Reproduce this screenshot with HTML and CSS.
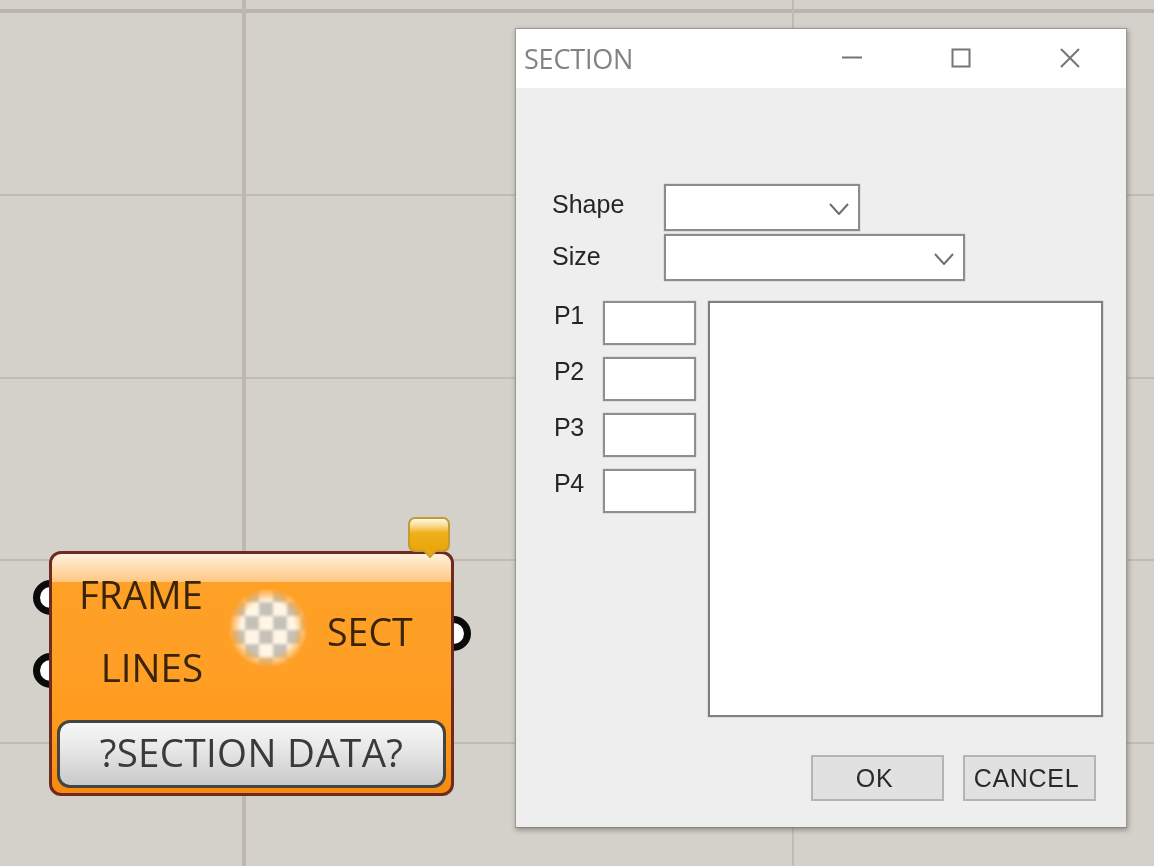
FILE: index.html
```html
<!DOCTYPE html>
<html lang="en">
<head>
<meta charset="utf-8">
<title>SECTION</title>
<link rel="stylesheet" href="styles.css">
</head>
<body>
<div class="canvas">
  <div class="gl gl-h gl-h0"></div>
  <div class="gl gl-h gl-h1"></div>
  <div class="gl gl-h gl-h2"></div>
  <div class="gl gl-h gl-h3"></div>
  <div class="gl gl-h gl-h4"></div>
  <div class="gl gl-v gl-v0"></div>
  <div class="gl gl-v gl-v1"></div>

  <div class="node">
    <span class="port port-a"></span>
    <span class="port port-b"></span>
    <span class="port port-c"></span>
    <div class="node-face">
      <div class="node-main">
        <div class="inputs">
          <span>FRAME</span>
          <span>LINES</span>
        </div>
        <svg class="checker" width="84" height="84" viewBox="0 0 84 84" aria-hidden="true">
          <defs>
            <pattern id="chk" width="28" height="28" patternUnits="userSpaceOnUse" x="5" y="2">
              <rect width="28" height="28" fill="#fff6e6"/>
              <rect x="0" y="14" width="14" height="14" fill="#c6c1b8"/>
              <rect x="14" y="0" width="14" height="14" fill="#c6c1b8"/>
            </pattern>
            <filter id="soft" x="-20%" y="-20%" width="140%" height="140%"><feGaussianBlur stdDeviation="1.8"/></filter>
            <radialGradient id="fade">
              <stop offset="0.66" stop-color="#fff"/>
              <stop offset="1" stop-color="#fff" stop-opacity="0"/>
            </radialGradient>
            <mask id="disc"><circle cx="42" cy="42" r="40" fill="url(#fade)"/></mask>
          </defs>
          <g mask="url(#disc)"><rect width="84" height="84" fill="url(#chk)" filter="url(#soft)"/></g>
        </svg>
        <span class="output">SECT</span>
      </div>
      <div class="node-button">?SECTION DATA?</div>
    </div>
    <div class="balloon"></div>
  </div>

  <div class="dialog">
    <div class="titlebar">
      <span class="title">SECTION</span>
      <div class="win-controls">
        <svg width="20" height="20" viewBox="0 0 20 20" aria-hidden="true"><path d="M0 9.5h20" class="glyph"/></svg>
        <svg width="20" height="20" viewBox="0 0 20 20" aria-hidden="true"><path d="M1.5 1.5h17v17h-17z" class="glyph"/></svg>
        <svg width="20" height="20" viewBox="0 0 20 20" aria-hidden="true"><path d="M1 1l18 18M19 1L1 19" class="glyph"/></svg>
      </div>
    </div>
    <div class="dialog-body">
      <div class="combo-row">
        <label class="lbl lbl-combo">Shape</label>
        <div class="combo combo-s"><svg width="20" height="12" viewBox="0 0 20 12" aria-hidden="true"><path d="M1 1l9 10 9-10" class="chev"/></svg></div>
      </div>
      <div class="combo-row combo-row-2">
        <label class="lbl lbl-combo">Size</label>
        <div class="combo combo-l"><svg width="20" height="12" viewBox="0 0 20 12" aria-hidden="true"><path d="M1 1l9 10 9-10" class="chev"/></svg></div>
      </div>
      <div class="params">
        <div class="param-list">
          <div class="param"><label class="lbl lbl-p">P1</label><div class="field"></div></div>
          <div class="param"><label class="lbl lbl-p">P2</label><div class="field"></div></div>
          <div class="param"><label class="lbl lbl-p">P3</label><div class="field"></div></div>
          <div class="param"><label class="lbl lbl-p">P4</label><div class="field"></div></div>
        </div>
        <div class="preview"></div>
      </div>
      <div class="actions">
        <div class="btn">OK</div>
        <div class="btn">CANCEL</div>
      </div>
    </div>
  </div>
</div>
</body>
</html>
```
FILE: styles.css
```css
* { box-sizing: border-box; }
html, body { margin: 0; padding: 0; }
body { width: 1154px; height: 866px; overflow: hidden; background: #d4d0ca; }
.canvas { position: relative; width: 1154px; height: 866px; overflow: hidden; }

/* canvas grid */
.gl { position: absolute; background: #c0bcb5; filter: blur(0.6px); }
.gl-h { left: 0; width: 1154px; height: 2px; }
.gl-v { top: 0; height: 866px; width: 2px; }
.gl-h0 { top: 9px; height: 4px; background: #b9b5ae; }
.gl-h1 { top: 194px; }
.gl-h2 { top: 377px; }
.gl-h3 { top: 559px; }
.gl-h4 { top: 742px; }
.gl-v0 { left: 242px; width: 4px; background: #bdb9b2; }
.gl-v1 { left: 792px; }

/* component node */
.node { position: absolute; left: 49px; top: 551px; width: 405px; height: 245px; filter: blur(0.5px); }
.port { position: absolute; width: 35px; height: 35px; border: 7px solid #0a0a0a; border-radius: 50%; background: #fff; }
.port-a { left: -16px; top: 29px; }
.port-b { left: -16px; top: 102px; }
.port-c { left: 387px; top: 65px; }
.node-face {
  position: relative;
  width: 100%;
  height: 100%;
  border: 3px solid #6f2a20;
  border-radius: 12px;
  display: flex;
  flex-direction: column;
  padding: 0 5px 5px;
  background:
    linear-gradient(to bottom, #fff1de 0, #ffc782 28px, transparent 28px) no-repeat,
    linear-gradient(to bottom, #ffa127 0, #ff9f25 120px, #ff9a1c 165px, #f88a10 100%);
  font-family: "Open Sans", "Noto Sans", sans-serif;
  color: #3a2408;
}
.node-main { flex: 1; display: flex; align-items: center; min-height: 0; }
.inputs {
  width: 146px;
  height: 100%;
  display: flex;
  flex-direction: column;
  align-items: flex-end;
  padding-top: 19px;
  gap: 31px;
  font-size: 38.5px;
  line-height: 42px;
}
.checker { flex: none; margin: 0 0 19px 23px; }
.output { font-size: 37.5px; line-height: 42px; margin: 0 0 11px 17px; }
.node-button {
  flex: none;
  height: 68px;
  border: 3px solid #444442;
  border-radius: 13px;
  background: linear-gradient(to bottom, #f7f7f7 0, #e8e8e8 40%, #c9c9c9 100%);
  display: flex;
  align-items: center;
  justify-content: center;
  font-size: 38.5px;
  letter-spacing: 0.35px;
  line-height: 42px;
  color: #3a3a3a;
  padding-bottom: 5px;
}
.balloon {
  position: absolute;
  left: 359px;
  top: -34px;
  width: 42px;
  height: 35px;
  border: 2px solid #c39a34;
  border-radius: 7px;
  background: linear-gradient(to bottom, #fff8e8 0, #f8da8c 22%, #f0b01a 45%, #e9a60c 100%);
}
.balloon::after {
  content: "";
  position: absolute;
  left: 13px;
  bottom: -8px;
  width: 12px;
  height: 12px;
  background: #eaa70d;
  border: solid #c39a34;
  border-width: 0 2px 2px 0;
  transform: rotate(45deg) scale(.7);
}

/* dialog window */
.dialog {
  position: absolute;
  left: 515px;
  top: 28px;
  width: 612px;
  height: 800px;
  border: 1px solid #9b9891;
  border-bottom-color: #8a8780;
  background: #eeeeee;
  box-shadow: 1px 2px 5px rgba(60, 56, 50, .45);
  display: flex;
  flex-direction: column;
}
.titlebar {
  flex: none;
  height: 59px;
  background: #fff;
  display: flex;
  align-items: center;
  justify-content: space-between;
  padding: 0 46px 0 8px;
}
.title {
  font-family: "Open Sans", "Noto Sans", sans-serif;
  font-size: 27px;
  font-weight: 400;
  letter-spacing: -0.2px;
  color: #828282;
  filter: blur(0.3px);
}
.win-controls { display: flex; gap: 89px; margin-bottom: 2px; }
.glyph { fill: none; stroke: #757575; stroke-width: 2; }

.dialog-body { flex: 1; padding: 96px 23px 0 36px; display: flex; flex-direction: column; }
.lbl {
  font-family: "Liberation Sans", Arial, sans-serif;
  font-size: 25px;
  line-height: 32px;
  color: #262626;
  filter: blur(0.35px);
}
.combo-row { display: flex; align-items: flex-start; }
.combo-row-2 { margin-top: 3px; }
.lbl-combo { width: 112px; margin-top: 4px; flex: none; }
.combo-row-2 .lbl-combo { margin-top: 6px; }
.combo {
  height: 47px;
  background: #fff;
  border: 2px solid #8c8c8c;
  display: flex;
  align-items: center;
  justify-content: flex-end;
  padding: 3px 9px 0 0;
  box-shadow: 0 0 1px #8c8c8c;
}
.combo-s { width: 196px; }
.combo-l { width: 301px; }
.chev { fill: none; stroke: #6e6e6e; stroke-width: 2; }

.params { display: flex; margin-top: 20px; gap: 12px; }
.param-list { display: flex; flex-direction: column; gap: 12px; width: 144px; }
.param { display: flex; align-items: flex-start; }
.lbl-p { width: 51px; padding-left: 2px; letter-spacing: -0.5px; flex: none; margin-top: -2px; }
.field { width: 93px; height: 44px; background: #fff; border: 2px solid #8f8f8f; box-shadow: 0 0 1px #8f8f8f; }
.preview { width: 395px; height: 416px; background: #fff; border: 2px solid #7f7f7f; box-shadow: 0 0 1px #7f7f7f; }

.actions { display: flex; justify-content: flex-end; gap: 19px; margin-top: 38px; padding-right: 7px; }
.btn {
  width: 133px;
  height: 46px;
  background: #e1e1e1;
  border: 2px solid #b4b4b4;
  display: flex;
  align-items: center;
  justify-content: center;
  font-family: "Liberation Sans", Arial, sans-serif;
  font-size: 25px;
  color: #2a2a2a;
  letter-spacing: 0.7px;
  padding-right: 6px;
  filter: blur(0.3px);
}
```
